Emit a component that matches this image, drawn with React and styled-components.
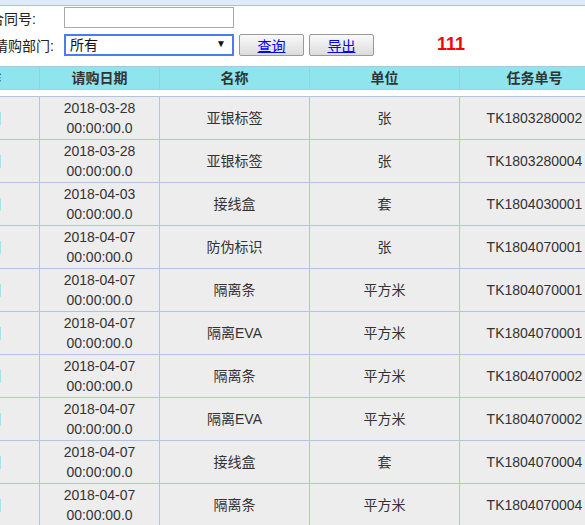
import React from 'react'
import styled, { createGlobalStyle } from 'styled-components'

const GlobalStyle = createGlobalStyle`
body {
    margin: 0;
    background: #fff;
    font-family: "Liberation Sans", "Noto Sans CJK SC", sans-serif;
    font-size: 14px;
    color: #333;
}
`

const Viewport = styled.div`
width: 585px;
height: 525px;
overflow: hidden;
`

const Page = styled.div`
margin-left: -81px;
width: 700px;
`

const TopStrip = styled.div`
height: 5px;
background: #dfeafa;
border-bottom: 1px solid #a9c1e3;
`

const Form = styled.div`
display: flex;
flex-direction: column;
gap: 6px;
padding: 1px 0 0 0;
height: 59px;
`

const FormRow = styled.div`
display: flex;
align-items: center;
height: 21px;
`

const Label = styled.span`
width: ${({ pad }) => 74 - pad}px;
padding-left: ${({ pad }) => pad}px;
margin-left: 71px;
white-space: nowrap;
color: #222;
`

const TextInput = styled.input`
box-sizing: border-box;
width: 170px;
height: 21px;
border: 1px solid #aaa;
padding: 0 4px;
`

const SelectWrap = styled.div`
position: relative;
width: 170px;
height: 22px;
`

const Select = styled.select`
appearance: none;
box-sizing: border-box;
width: 100%;
height: 100%;
border: 2px solid #4a7bef;
background: #fff;
padding: 0 4px;
font-family: inherit;
font-size: 14px;
color: #111;
outline: none;
`

const Arrow = styled.span`
position: absolute;
right: 8px;
top: 4px;
font-size: 10px;
color: #111;
pointer-events: none;
`

const Button = styled.button`
box-sizing: border-box;
width: 65px;
height: 22px;
margin-left: ${({ gap }) => gap}px;
border: 1px solid #999;
border-radius: 2px;
background: linear-gradient(#fafafa, #dcdcdc);
color: #00f;
font-family: inherit;
font-size: 14px;
text-decoration: underline;
padding: 0;
`

const Count = styled.span`
margin-left: 63px;
color: #f00;
font-weight: bold;
font-size: 18px;
`

const Table = styled.table`
border-collapse: collapse;
table-layout: fixed;
width: 690px;
`

const HeadTable = styled(Table)`
margin-bottom: 6px;
`

const HeadCell = styled.th`
height: 22px;
padding: 0;
background: #8ee5ee;
border: 1px solid #b0c4de;
font-weight: bold;
color: #333;
text-align: ${({ right }) => right ? 'right' : 'center'};
padding-right: ${({ right }) => right ? '38px' : '0'};
line-height: 20px;
`

const Cell = styled.td`
height: 40px;
padding: 1px 0;
background: #ededed;
border: 1px solid #b0c4de;
text-align: ${({ right }) => right ? 'right' : 'center'};
padding-right: ${({ right }) => right ? '38px' : '0'};
line-height: 20px;
color: #333;
`

const Link = styled.a`
color: #2a8fe8;
text-decoration: none;
`

const widths = [120, 120, 150, 150, 150]

const rows = [
    ['2018-03-28', '亚银标签', '张', 'TK1803280002'],
    ['2018-03-28', '亚银标签', '张', 'TK1803280004'],
    ['2018-04-03', '接线盒', '套', 'TK1804030001'],
    ['2018-04-07', '防伪标识', '张', 'TK1804070001'],
    ['2018-04-07', '隔离条', '平方米', 'TK1804070001'],
    ['2018-04-07', '隔离EVA', '平方米', 'TK1804070001'],
    ['2018-04-07', '隔离条', '平方米', 'TK1804070002'],
    ['2018-04-07', '隔离EVA', '平方米', 'TK1804070002'],
    ['2018-04-07', '接线盒', '套', 'TK1804070004'],
    ['2018-04-07', '隔离条', '平方米', 'TK1804070004'],
]

const Cols = () => (
    <colgroup>
        {widths.map((w, i) => <col key={i} style={{ width: w }} />)}
    </colgroup>
)

export default function App() {
    return (
        <Viewport>
            <GlobalStyle />
            <Page>
                <TopStrip />
                <Form>
                    <FormRow>
                        <Label pad={0}>合同号:</Label>
                        <TextInput type='text' />
                    </FormRow>
                    <FormRow>
                        <Label pad={4}>请购部门:</Label>
                        <SelectWrap>
                            <Select defaultValue='all'>
                                <option value='all'>所有</option>
                            </Select>
                            <Arrow>▼</Arrow>
                        </SelectWrap>
                        <Button gap={5}>查询</Button>
                        <Button gap={5}>导出</Button>
                        <Count>111</Count>
                    </FormRow>
                </Form>
                <HeadTable>
                    <Cols />
                    <thead>
                        <tr>
                            <HeadCell right>操作</HeadCell>
                            <HeadCell>请购日期</HeadCell>
                            <HeadCell>名称</HeadCell>
                            <HeadCell>单位</HeadCell>
                            <HeadCell>任务单号</HeadCell>
                        </tr>
                    </thead>
                </HeadTable>
                <Table>
                    <Cols />
                    <tbody>
                        {rows.map((r, i) => (
                            <tr key={i}>
                                <Cell right><Link href='#'>详细</Link></Cell>
                                <Cell>{r[0]}<br />00:00:00.0</Cell>
                                <Cell>{r[1]}</Cell>
                                <Cell>{r[2]}</Cell>
                                <Cell>{r[3]}</Cell>
                            </tr>
                        ))}
                    </tbody>
                </Table>
            </Page>
        </Viewport>
    )
}
